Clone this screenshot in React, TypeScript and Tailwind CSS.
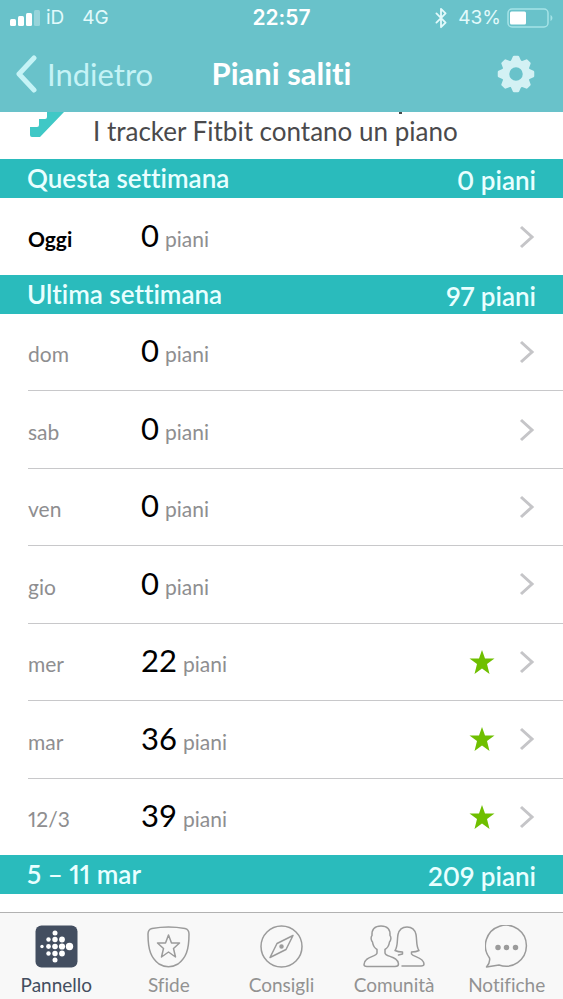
import type { ReactNode } from "react";
import { Bluetooth } from "lucide-react";

type Day = { label: string; floors: number; goal?: boolean; today?: boolean };

const today: Day = { label: "Oggi", floors: 0, today: true };

const lastWeek: Day[] = [
  { label: "dom", floors: 0 },
  { label: "sab", floors: 0 },
  { label: "ven", floors: 0 },
  { label: "gio", floors: 0 },
  { label: "mer", floors: 22, goal: true },
  { label: "mar", floors: 36, goal: true },
  { label: "12/3", floors: 39, goal: true },
];

function StatusBar() {
  return (
    <div className="grid h-9 grid-cols-[1fr_auto_1fr] items-center px-[10px] font-['Inter',sans-serif] text-[19px] text-[#e2fafb]">
      <div className="flex items-center gap-[6px]">
        <svg className="h-4 w-[30px]" viewBox="0 0 30 16" fill="#fff" aria-hidden="true">
          <rect x="0" y="9" width="6" height="7" rx="1.5" />
          <rect x="8" y="6" width="6" height="10" rx="1.5" />
          <rect x="16" y="3" width="6" height="13" rx="1.5" />
          <rect x="24" y="0" width="6" height="16" rx="1.5" fillOpacity="0.3" />
        </svg>
        <span>iD</span>
        <span className="ml-3">4G</span>
      </div>
      <div className="text-[21px] font-semibold text-white">22:57</div>
      <div className="flex items-center justify-end gap-[6px]">
        <Bluetooth className="h-[22px] w-[22px]" strokeWidth={2} aria-hidden="true" />
        <span>43%</span>
        <svg className="h-5 w-[46px]" viewBox="0 0 46 20" fill="none" aria-hidden="true">
          <rect x="1" y="1" width="40" height="18" rx="4" stroke="#a5e3e7" strokeWidth="1.5" />
          <rect x="3" y="3.500" width="16" height="13" rx="1.5" fill="#fff" />
          <path d="M43.500 7c2.500 1 2.500 5 0 6z" fill="#a5e3e7" />
        </svg>
      </div>
    </div>
  );
}

function Gear() {
  return (
    <svg className="h-[38px] w-[38px]" viewBox="-19 -19 38 38" fill="#d3f1f4" stroke="#d3f1f4" aria-hidden="true">
      <circle r="10.5" fill="none" strokeWidth="7.5" />
      {[0, 45, 90, 135, 180, 225, 270, 315].map((angle) => (
        <path
          key={angle}
          d="M-4 -12.500 L-2 -17 L2 -17 L4 -12.500z"
          strokeWidth="2.5"
          strokeLinejoin="round"
          transform={`rotate(${angle})`}
        />
      ))}
    </svg>
  );
}

function Header() {
  return (
    <header className="shrink-0 bg-[#69c2ca]">
      <StatusBar />
      <div className="grid h-[76px] grid-cols-[1fr_auto_1fr] items-center px-4">
        <button type="button" className="flex items-center gap-[10px] justify-self-start text-[31px] leading-9 text-[#c5f3f6]">
          <svg className="h-[38px] w-[21px]" viewBox="0 0 21 38" fill="none" stroke="currentColor" strokeWidth="5" strokeLinecap="round" strokeLinejoin="round" aria-hidden="true">
            <path d="M18 3L3 19L18 35" />
          </svg>
          Indietro
        </button>
        <h1 className="pb-[2px] text-[31px] font-bold leading-9 text-white">Piani saliti</h1>
        <button type="button" aria-label="Impostazioni" className="mr-3 justify-self-end">
          <Gear />
        </button>
      </div>
    </header>
  );
}

function Intro() {
  return (
    <div className="relative flex h-[47px] shrink-0 gap-[29px] overflow-hidden pl-[30px]">
      <svg className="h-[25px] w-[34px]" viewBox="0 0 34 25" fill="#3fc8c6" aria-hidden="true">
        <path d="M17 0H34L10 25H2Q0 25 0 23V15H7Q9 15 9 13V7H15Q17 7 17 5z" />
      </svg>
      <p className="pt-[3px] text-[26px] leading-8 text-[#4a4a4c]">I tracker Fitbit contano un piano</p>
      <span className="absolute left-[399px] top-0 h-[2px] w-[3px] bg-[#4a4a4c]" />
    </div>
  );
}

function WeekBar({ title, total }: { title: string; total: string }) {
  return (
    <div className="flex h-[39px] shrink-0 items-start justify-between bg-[#2abbbc] px-[27px] text-[26px] font-semibold leading-9 text-[#e9ffff]">
      <h2 className="pt-px">{title}</h2>
      <span className="pt-[3px]">{total}</span>
    </div>
  );
}

function DayRow({ day }: { day: Day }) {
  return (
    <button type="button" className="flex w-full flex-1 items-center pr-7 text-left">
      <span className="flex flex-1 items-baseline pb-[2px] text-[21px] text-[#8e8e90]">
        <span className={day.today ? "w-[113px] font-bold text-black" : "w-[113px]"}>{day.label}</span>
        <span className="text-[31px] leading-9 tabular-nums text-black">{day.floors}</span>
        <span className="ml-[6px]">piani</span>
      </span>
      {day.goal && (
        <svg className="mr-6 h-[26px] w-[26px]" viewBox="-13 -13 26 26" fill="#6fbf00" role="img" aria-label="Obiettivo raggiunto">
          <path d="M0 -12L3 -3.500H12.500L5 2L7.500 12L0 6.500L-7.500 12L-5 2L-12.500 -3.500H-3z" />
        </svg>
      )}
      <svg className="h-6 w-4" viewBox="0 0 16 24" fill="none" stroke="#c5c5c8" strokeWidth="3" aria-hidden="true">
        <path d="M2 2L13 12L2 22" />
      </svg>
    </button>
  );
}

const line = { fill: "none", stroke: "#9b9b9b", strokeWidth: 1.5, strokeLinejoin: "round" as const, strokeLinecap: "round" as const };

function DashboardIcon() {
  const dots = [
    [7, 21.5, 1.7],
    [13.5, 14.5, 2.2], [13.5, 21.5, 2.4], [13.5, 28.5, 2.2],
    [20, 8, 2.5], [20, 14.5, 2.7], [20, 21.5, 2.8], [20, 28.5, 2.7], [20, 35, 2.5],
    [27, 14.5, 2.9], [27, 21.5, 3.1], [27, 28.5, 2.9],
    [34.5, 21.5, 3.7],
  ];
  return (
    <svg className="h-[43px] w-[43px]" viewBox="0 0 43 43" aria-hidden="true">
      <rect x="0.500" y="0.500" width="42" height="42" rx="6" fill="#434e60" />
      {dots.map(([x, y, r]) => (
        <circle key={`${x}-${y}`} cx={x} cy={y} r={r} fill="#fff" />
      ))}
    </svg>
  );
}

function ChallengesIcon() {
  return (
    <svg className="h-[43px] w-[43px]" viewBox="0 0 43 43" {...line} aria-hidden="true">
      <path d="M5 3.500Q21.500 0.500 38 3.500Q42 4.500 42 9C42 25 39 33 31 39Q21.500 44.500 12 39C4 33 1 25 1 9Q1 4.500 5 3.500z" />
      <path d="M21.500 10L24.500 18H32.500L26.500 23.500L28.500 32L21.500 27L14.500 32L16.500 23.500L10.500 18H18.500z" />
    </svg>
  );
}

function GuidanceIcon() {
  return (
    <svg className="h-[43px] w-[43px]" viewBox="0 0 43 43" {...line} aria-hidden="true">
      <circle cx="21.500" cy="21.500" r="20.500" />
      <path d="M33 10.500L17 18.500L10 32.500L26 24.500z" />
      <circle cx="21.500" cy="21.500" r="1.5" fill="#9b9b9b" />
    </svg>
  );
}

function CommunityIcon() {
  return (
    <svg className="h-[43px] w-[62px]" viewBox="0 0 62 43" {...line} aria-hidden="true">
      <path d="M18 1C24.500 1 27.500 4.500 27 10.500C28.500 12 28 15.500 26.500 17C26 20.500 24.500 23 22 24.500V28C22 32 35 31 35.500 39Q35.500 41.500 32 41.500H4Q1 41.500 1 39.500C1.500 31 14 32 14 28V24.500C11.500 23 10 20.500 9.500 17C8 15.500 7.500 12 9 10.500C8.500 4.500 11.500 1 18 1z" />
      <path d="M35.500 30L39.500 29V27Q35 27 32 25.500C35 22 34 14 35 9.500C36 5 39 2 44 2C49 2 52 5 53 9.500C54 14 53 22 56 25.500Q53 27 48.500 27V29C50 32 60.500 32 61 39Q61 41 58 41H39" />
    </svg>
  );
}

function NotificationsIcon() {
  return (
    <svg className="h-[43px] w-[43px]" viewBox="0 0 43 43" {...line} aria-hidden="true">
      <path d="M4.500 33A20.500 20.500 0 1 1 14 40L1.500 42Q5.500 37 4.500 33z" />
      {[13, 21.5, 30.5].map((x) => (
        <circle key={x} cx={x} cy="22.500" r="2" fill="#9b9b9b" />
      ))}
    </svg>
  );
}

function Tab({ label, active, children }: { label: string; active?: boolean; children: ReactNode }) {
  return (
    <a
      href="#"
      aria-current={active ? "page" : undefined}
      className={
        active
          ? "flex flex-col items-center gap-[5px] pt-3 text-[19px] leading-6 text-[#434e60]"
          : "flex flex-col items-center gap-[5px] pt-3 text-[19px] leading-6 text-[#929292]"
      }
    >
      {children}
      {label}
    </a>
  );
}

export default function App() {
  return (
    <div className="flex min-h-screen flex-col bg-white font-['Lato',sans-serif] proportional-nums [font-variant-ligatures:none]">
      <Header />
      <main className="flex flex-1 flex-col">
        <Intro />
        <WeekBar title="Questa settimana" total="0 piani" />
        <div className="flex h-[77px] shrink-0 pl-7">
          <DayRow day={today} />
        </div>
        <WeekBar title="Ultima settimana" total="97 piani" />
        <ul className="flex flex-1 flex-col divide-y divide-[#c8c8ca] pl-7">
          {lastWeek.map((day) => (
            <li key={day.label} className="flex min-h-16 flex-1">
              <DayRow day={day} />
            </li>
          ))}
        </ul>
        <WeekBar title="5 – 11 mar" total="209 piani" />
      </main>
      <nav className="mt-[18px] grid h-[87px] shrink-0 grid-cols-5 border-t border-[#b2b2b2] bg-[#f8f8f8]">
        <Tab label="Pannello" active><DashboardIcon /></Tab>
        <Tab label="Sfide"><ChallengesIcon /></Tab>
        <Tab label="Consigli"><GuidanceIcon /></Tab>
        <Tab label="Comunità"><CommunityIcon /></Tab>
        <Tab label="Notifiche"><NotificationsIcon /></Tab>
      </nav>
    </div>
  );
}
